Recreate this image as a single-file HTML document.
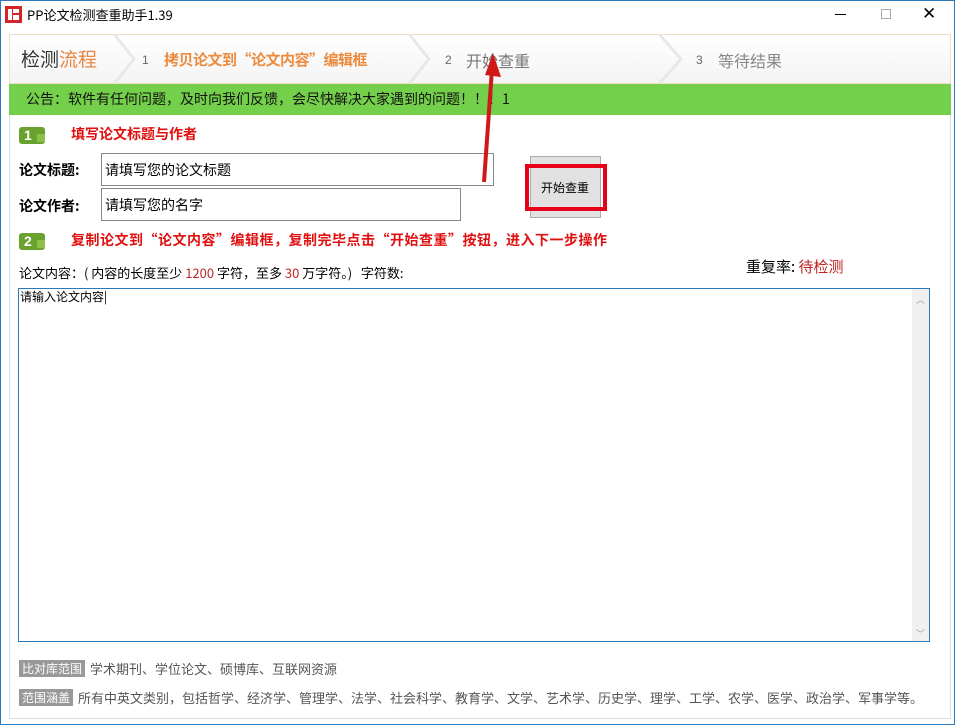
<!DOCTYPE html>
<html><head><meta charset="utf-8"><style>
*{margin:0;padding:0;box-sizing:border-box}
body{width:955px;height:725px;background:#fff;font-family:"Liberation Sans","Noto Sans CJK SC",sans-serif;position:relative;overflow:hidden;border:1px solid #2b79b8}
.a{position:absolute;white-space:nowrap}
.cjk{font-family:"Noto Sans CJK SC","WenQuanYi Zen Hei",sans-serif}
</style></head><body>
<div class="a" style="left:4px;top:5px;width:17px;height:17px;background:#d4262a"></div>
<div class="a" style="left:7px;top:8px;width:4px;height:11px;background:#fff"></div>
<div class="a" style="left:12px;top:8px;width:6px;height:4px;background:#fff"></div>
<div class="a" style="left:12px;top:14px;width:6px;height:5px;background:#fff"></div>
<div class="a cjk" style="left:26px;top:4px;font-size:13px;color:#000">PP论文检测查重助手1.39</div>
<div class="a" style="left:834px;top:13px;width:11px;height:1px;background:#000"></div>
<div class="a" style="left:880px;top:8px;width:10px;height:10px;border:1px solid #aaa"></div>
<div class="a" style="left:921px;top:4px;font-size:17px;color:#000;line-height:18px">✕</div>
<div class="a" style="left:8px;top:33px;width:942px;height:50px;background:linear-gradient(#fff,#f4f4f4);border:1px solid #f2dcc2"></div>
<svg class="a" style="left:8px;top:33px" width="942" height="50">
<path d="M105 0 L125 25 L105 50" fill="none" stroke="#e8e8e8" stroke-width="3"/>
<path d="M400 0 L420 25 L400 50" fill="none" stroke="#e8e8e8" stroke-width="3"/>
<path d="M650 0 L672 25 L650 50" fill="none" stroke="#e8e8e8" stroke-width="3"/>
</svg>
<div class="a cjk" style="left:20px;top:46px;font-size:19px;color:#333;line-height:24px">检测<span style="color:#e9853f">流程</span></div>
<div class="a" style="left:141px;top:52px;font-size:12px;color:#666">1</div>
<div class="a cjk" style="left:163px;top:49px;font-size:15px;color:#ec8a3e;font-weight:bold;line-height:20px;letter-spacing:-0.5px">拷贝论文到“论文内容”编辑框</div>
<div class="a" style="left:444px;top:52px;font-size:12px;color:#666">2</div>
<div class="a cjk" style="left:465px;top:49px;font-size:16px;color:#777;line-height:20px">开始查重</div>
<div class="a" style="left:695px;top:52px;font-size:12px;color:#666">3</div>
<div class="a cjk" style="left:717px;top:49px;font-size:16px;color:#888;line-height:20px">等待结果</div>
<div class="a" style="left:8px;top:83px;width:942px;height:31px;background:#74cf4b"></div>
<div class="a cjk" style="left:25px;top:89px;font-size:14px;color:#111;line-height:18px">公告：软件有任何问题，及时向我们反馈，会尽快解决大家遇到的问题！！！1</div>
<div class="a" style="left:8px;top:114px;width:942px;height:604px;border:1px solid #d6dfe8;border-top:none"></div>
<div class="a" style="left:18px;top:126px;width:26px;height:17px;background:#6aa22e;border-radius:3px;color:#fff;font-weight:bold;font-size:14px;line-height:17px;padding-left:5px">1</div>
<div class="a" style="left:36px;top:133px;width:8px;height:8px;background:#8cc04a"></div>
<div class="a cjk" style="left:70px;top:124px;font-size:14px;color:#e01010;font-weight:bold;line-height:18px">填写论文标题与作者</div>
<div class="a cjk" style="left:18px;top:159px;font-size:14px;font-weight:bold;color:#000">论文标题:</div>
<div class="a" style="left:100px;top:152px;width:393px;height:33px;border:1px solid #888;background:#fff"></div>
<div class="a cjk" style="left:104px;top:159px;font-size:14px;color:#000">请填写您的论文标题</div>
<div class="a cjk" style="left:18px;top:195px;font-size:14px;font-weight:bold;color:#000">论文作者:</div>
<div class="a" style="left:100px;top:187px;width:360px;height:33px;border:1px solid #888;background:#fff"></div>
<div class="a cjk" style="left:104px;top:194px;font-size:14px;color:#000">请填写您的名字</div>
<div class="a" style="left:529px;top:155px;width:71px;height:62px;background:#e1e1e1;border:1px solid #adadad"></div>
<div class="a" style="left:524px;top:163px;width:82px;height:47px;border:4px solid #e6001a"></div>
<div class="a cjk" style="left:540px;top:178px;font-size:12px;color:#000">开始查重</div>
<svg class="a" style="left:470px;top:50px" width="40" height="140">
<path d="M13 131 L21 18" stroke="#d01818" stroke-width="4" fill="none"/>
<path d="M22 2 L30 26 L14 24 Z" fill="#d01818"/>
</svg>
<div class="a" style="left:18px;top:232px;width:26px;height:17px;background:#6aa22e;border-radius:3px;color:#fff;font-weight:bold;font-size:14px;line-height:17px;padding-left:5px">2</div>
<div class="a" style="left:36px;top:239px;width:8px;height:8px;background:#8cc04a"></div>
<div class="a cjk" style="left:70px;top:230px;font-size:14px;color:#e01010;font-weight:bold;line-height:18px;letter-spacing:0.5px">复制论文到“论文内容”编辑框，复制完毕点击“开始查重”按钮，进入下一步操作</div>
<div class="a cjk" style="left:18px;top:264px;font-size:13px;color:#000;line-height:16px">论文内容：( 内容的长度至少 <span style="color:#c02828">1200</span> 字符，至多 <span style="color:#c02828">30</span> 万字符。)&nbsp;&nbsp; 字符数:</div>
<div class="a cjk" style="left:745px;top:257px;font-size:15px;color:#000;line-height:18px">重复率: <span style="color:#c02020">待检测</span></div>
<div class="a" style="left:17px;top:287px;width:912px;height:354px;border:1px solid #2b79b8;background:#fff"></div>
<div class="a" style="left:911px;top:288px;width:17px;height:352px;background:#f0f0f0"></div>
<div class="a" style="left:915px;top:292px;font-size:9px;color:#999">︿</div>
<div class="a" style="left:915px;top:626px;font-size:9px;color:#999">﹀</div>
<div class="a cjk" style="left:19px;top:288px;font-size:12px;color:#000;line-height:15px">请输入论文内容|</div>
<div class="a cjk" style="left:18px;top:659px;width:66px;height:17px;background:#999;color:#fff;font-size:12px;line-height:17px;text-align:center">比对库范围</div>
<div class="a cjk" style="left:89px;top:659px;font-size:13px;color:#555;line-height:17px">学术期刊、学位论文、硕博库、互联网资源</div>
<div class="a cjk" style="left:18px;top:688px;width:54px;height:17px;background:#999;color:#fff;font-size:12px;line-height:17px;text-align:center">范围涵盖</div>
<div class="a cjk" style="left:77px;top:688px;font-size:13px;color:#555;line-height:17px">所有中英文类别，包括哲学、经济学、管理学、法学、社会科学、教育学、文学、艺术学、历史学、理学、工学、农学、医学、政治学、军事学等。</div>
</body></html>
